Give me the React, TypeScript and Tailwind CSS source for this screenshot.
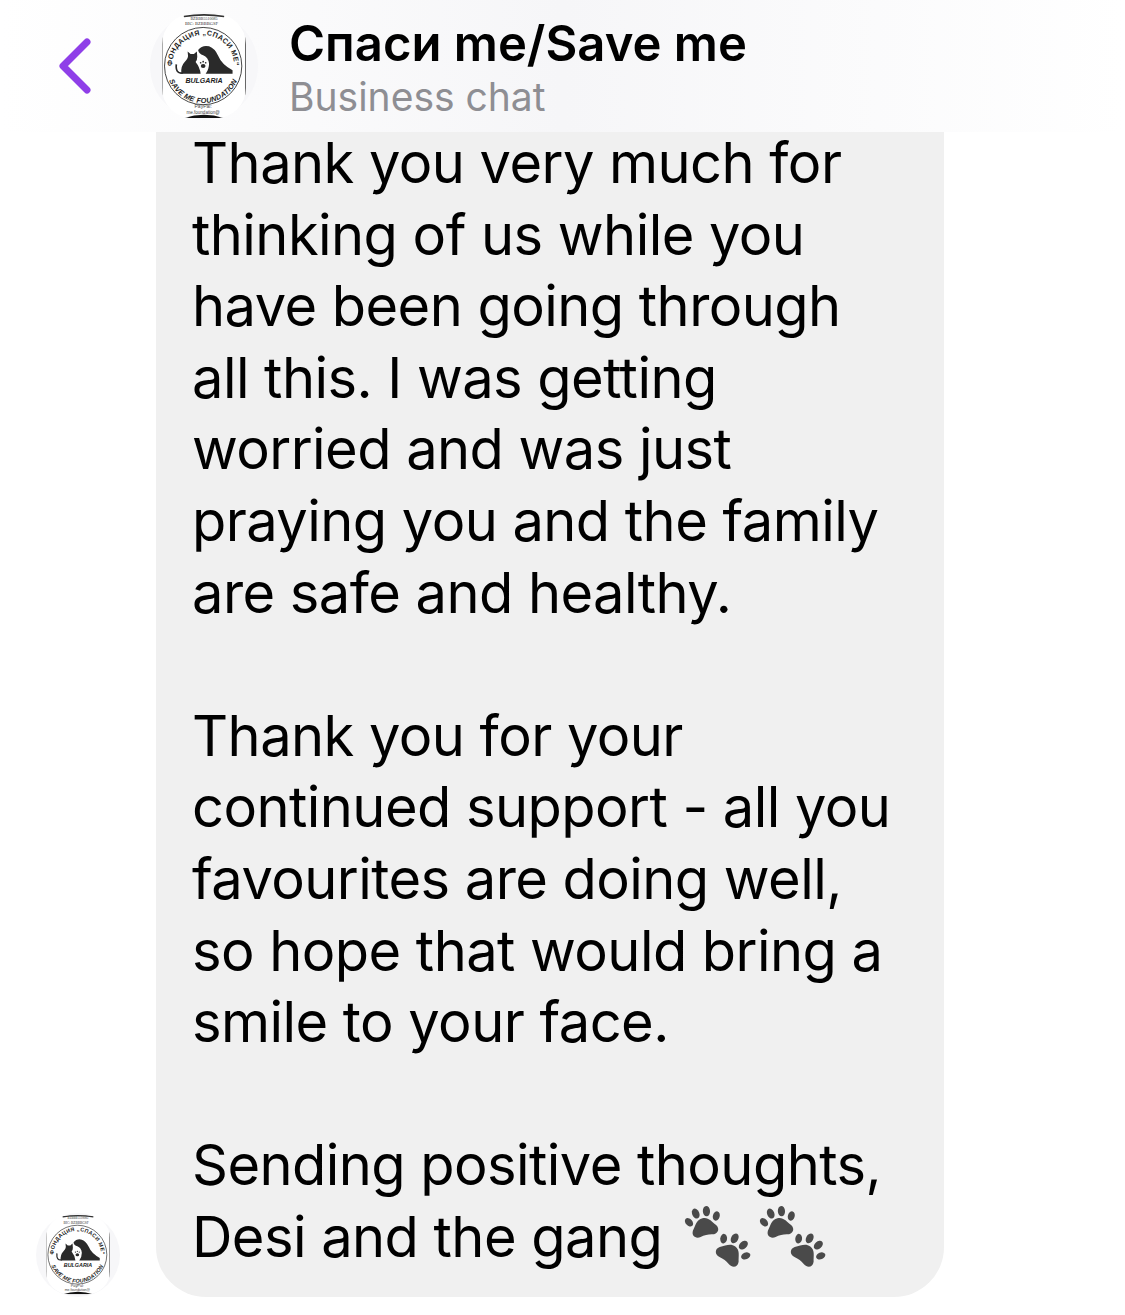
const font = { fontFamily: "Inter, 'Noto Sans', sans-serif" };

function Paw({ x, y, angle }: { x: number; y: number; angle: number }) {
  return (
    <g transform={`translate(${x} ${y}) rotate(${angle})`} fill="#4a4a4a">
      <path d="M0 -7 C6 -7 8 -2 12 3 C15 8 11 12 6 11 C2 10 -2 10 -6 11 C-11 12 -15 8 -12 3 C-8 -2 -6 -7 0 -7Z" />
      <ellipse cx="-14" cy="-6" rx="3.4" ry="4.8" transform="rotate(-30 -14 -6)" />
      <ellipse cx="-5.5" cy="-13" rx="3.6" ry="5.2" transform="rotate(-10 -5.5 -13)" />
      <ellipse cx="5.5" cy="-13" rx="3.6" ry="5.2" transform="rotate(10 5.5 -13)" />
      <ellipse cx="14" cy="-6" rx="3.4" ry="4.8" transform="rotate(30 14 -6)" />
    </g>
  );
}

function Paws() {
  return (
    <svg width="75" height="66" viewBox="0 0 75 66" className="shrink-0">
      <Paw x={20} y={21} angle={-13} />
      <Paw x={47} y={48} angle={38} />
    </svg>
  );
}

function Logo({ id, width, ring }: { id: string; width: number; ring: number }) {
  return (
    <div
      className="flex items-center justify-center rounded-full bg-[#f7f7f9] shrink-0"
      style={{ width: ring, height: ring }}
    >
      <svg width={width} height={width * 1.24} viewBox="0 0 100 124" className="shrink-0">
        <defs>
          <clipPath id={`${id}-c`}>
            <rect x="0" y="0" width="100" height="124" rx="36" />
          </clipPath>
          <path id={`${id}-t`} d="M 12 62 A 37 37 0 0 1 86 62" />
          <path id={`${id}-b`} d="M 5 62 A 44 44 0 0 0 93 62" />
        </defs>
        <g clipPath={`url(#${id}-c)`}>
          <rect width="100" height="124" fill="#fff" />
          <path d="M 26 124 Q 50 116 74 124 Z" fill="#111" />
          <path d="M 26 3 Q 50 -1 74 3" fill="none" stroke="#333" strokeWidth="2" />
          <line x1="0.6" y1="20" x2="0.6" y2="101" stroke="#aaa" strokeWidth="1.2" />
          <line x1="99.4" y1="20" x2="99.4" y2="101" stroke="#666" strokeWidth="1.2" />
          <circle cx="49" cy="62" r="46" fill="none" stroke="#222" strokeWidth="1" />
          {/* cat */}
          <path d="M23 71 Q22 62 27 57 Q31 53 31 50 L30.5 44.5 L34 47.5 L38 47.5 L41.5 44.5 L42 51 Q42 55 40 57 Q45 63 46 71 Z" fill="#2a2a2a" />
          <path d="M17 60 Q16 72 25 70" fill="none" stroke="#2a2a2a" strokeWidth="2" />
          {/* dog */}
          <path d="M43 43 Q48 36.5 56 38.5 Q63 41 67 50 Q71 60 84 67 L84 71 L52 71 Q56 66 56 59 Q55 51 49 49 Q44 48 43 43Z" fill="#2a2a2a" />
          {/* paw between them */}
          <ellipse cx="49" cy="62" rx="2.8" ry="2.4" fill="#2a2a2a" />
          <circle cx="46" cy="58" r="1" fill="#2a2a2a" />
          <circle cx="49" cy="56.8" r="1" fill="#2a2a2a" />
          <circle cx="52" cy="58" r="1" fill="#2a2a2a" />
        </g>
        <g fontFamily="'Liberation Sans', sans-serif" fontWeight="700" fill="#222">
          <text fontSize="8.5" letterSpacing=".5">
            <textPath href={`#${id}-t`} startOffset="50%" textAnchor="middle">
              ФОНДАЦИЯ „СПАСИ МЕ“
            </textPath>
          </text>
          <text fontSize="8.6" fontStyle="italic" letterSpacing=".3">
            <textPath href={`#${id}-b`} startOffset="50%" textAnchor="middle">
              SAVE ME FOUNDATION
            </textPath>
          </text>
          <text x="50" y="82" fontSize="8.4" fontStyle="italic" textAnchor="middle">
            BULGARIA
          </text>
        </g>
        <g fontFamily="'Liberation Serif', serif" fill="#333" textAnchor="middle">
          <text x="50" y="7" fontSize="4.8">BZBBB5510085</text>
          <text x="47" y="13.5" fontSize="5.4">BIC: BZBBBGSF</text>
        </g>
        <g fontFamily="'Liberation Sans', sans-serif" fill="#444" textAnchor="middle">
          <text x="49" y="112" fontSize="6">PayPal:</text>
          <text x="49" y="119" fontSize="5.4">me.foundation@</text>
        </g>
      </svg>
    </div>
  );
}

const first = [
  "Thank you very much for",
  "thinking of us while you",
  "have been going through",
  "all this. I was getting",
  "worried and was just",
  "praying you and the family",
  "are safe and healthy.",
];
const second = [
  "Thank you for your",
  "continued support - all you",
  "favourites are doing well,",
  "so hope that would bring a",
  "smile to your face.",
];

export default function App() {
  return (
    <div className="w-[1125px] h-[1315px] bg-white overflow-hidden flex flex-col" style={font}>
      <header className="h-[132px] shrink-0 flex items-center bg-gradient-to-r from-white via-[#f6f6f8] to-white">
        <svg width="36" height="60" viewBox="0 0 36 60" className="ml-[57px] mr-[57px] shrink-0">
          <path d="M30 6 L6 30 L30 54" fill="none" stroke="#8f3fe8" strokeWidth="7" strokeLinecap="round" strokeLinejoin="round" />
        </svg>
        <Logo id="top" width={84} ring={108} />
        <div className="ml-[31px] pt-[5px] flex flex-col">
          <div className="text-[49px] leading-[56px] font-semibold text-black">Спаси me/Save me</div>
          <div className="text-[39px] leading-[50px] text-[#8e8e93]">Business chat</div>
        </div>
      </header>
      <div className="flex items-end">
        <div className="ml-[36px] mr-[36px] shrink-0">
          <Logo id="low" width={64} ring={84} />
        </div>
        <div className="w-[788px] h-[1165px] bg-[#f0f0f0] rounded-b-[50px] pl-[36px] text-[56px] leading-[71.6px] tracking-[-0.55px] text-black">
          <div className="-mt-[4px]">
            {first.map((l) => (
              <div key={l} className="whitespace-nowrap">{l}</div>
            ))}
            <div className="h-[71.6px]" />
            {second.map((l) => (
              <div key={l} className="whitespace-nowrap">{l}</div>
            ))}
            <div className="h-[71.6px]" />
            <div className="whitespace-nowrap">Sending positive thoughts,</div>
            <div className="flex items-start whitespace-nowrap">
              Desi and the gang
              <span className="ml-[22px] mt-[2px] flex">
                <Paws />
                <Paws />
              </span>
            </div>
          </div>
        </div>
      </div>
    </div>
  );
}
